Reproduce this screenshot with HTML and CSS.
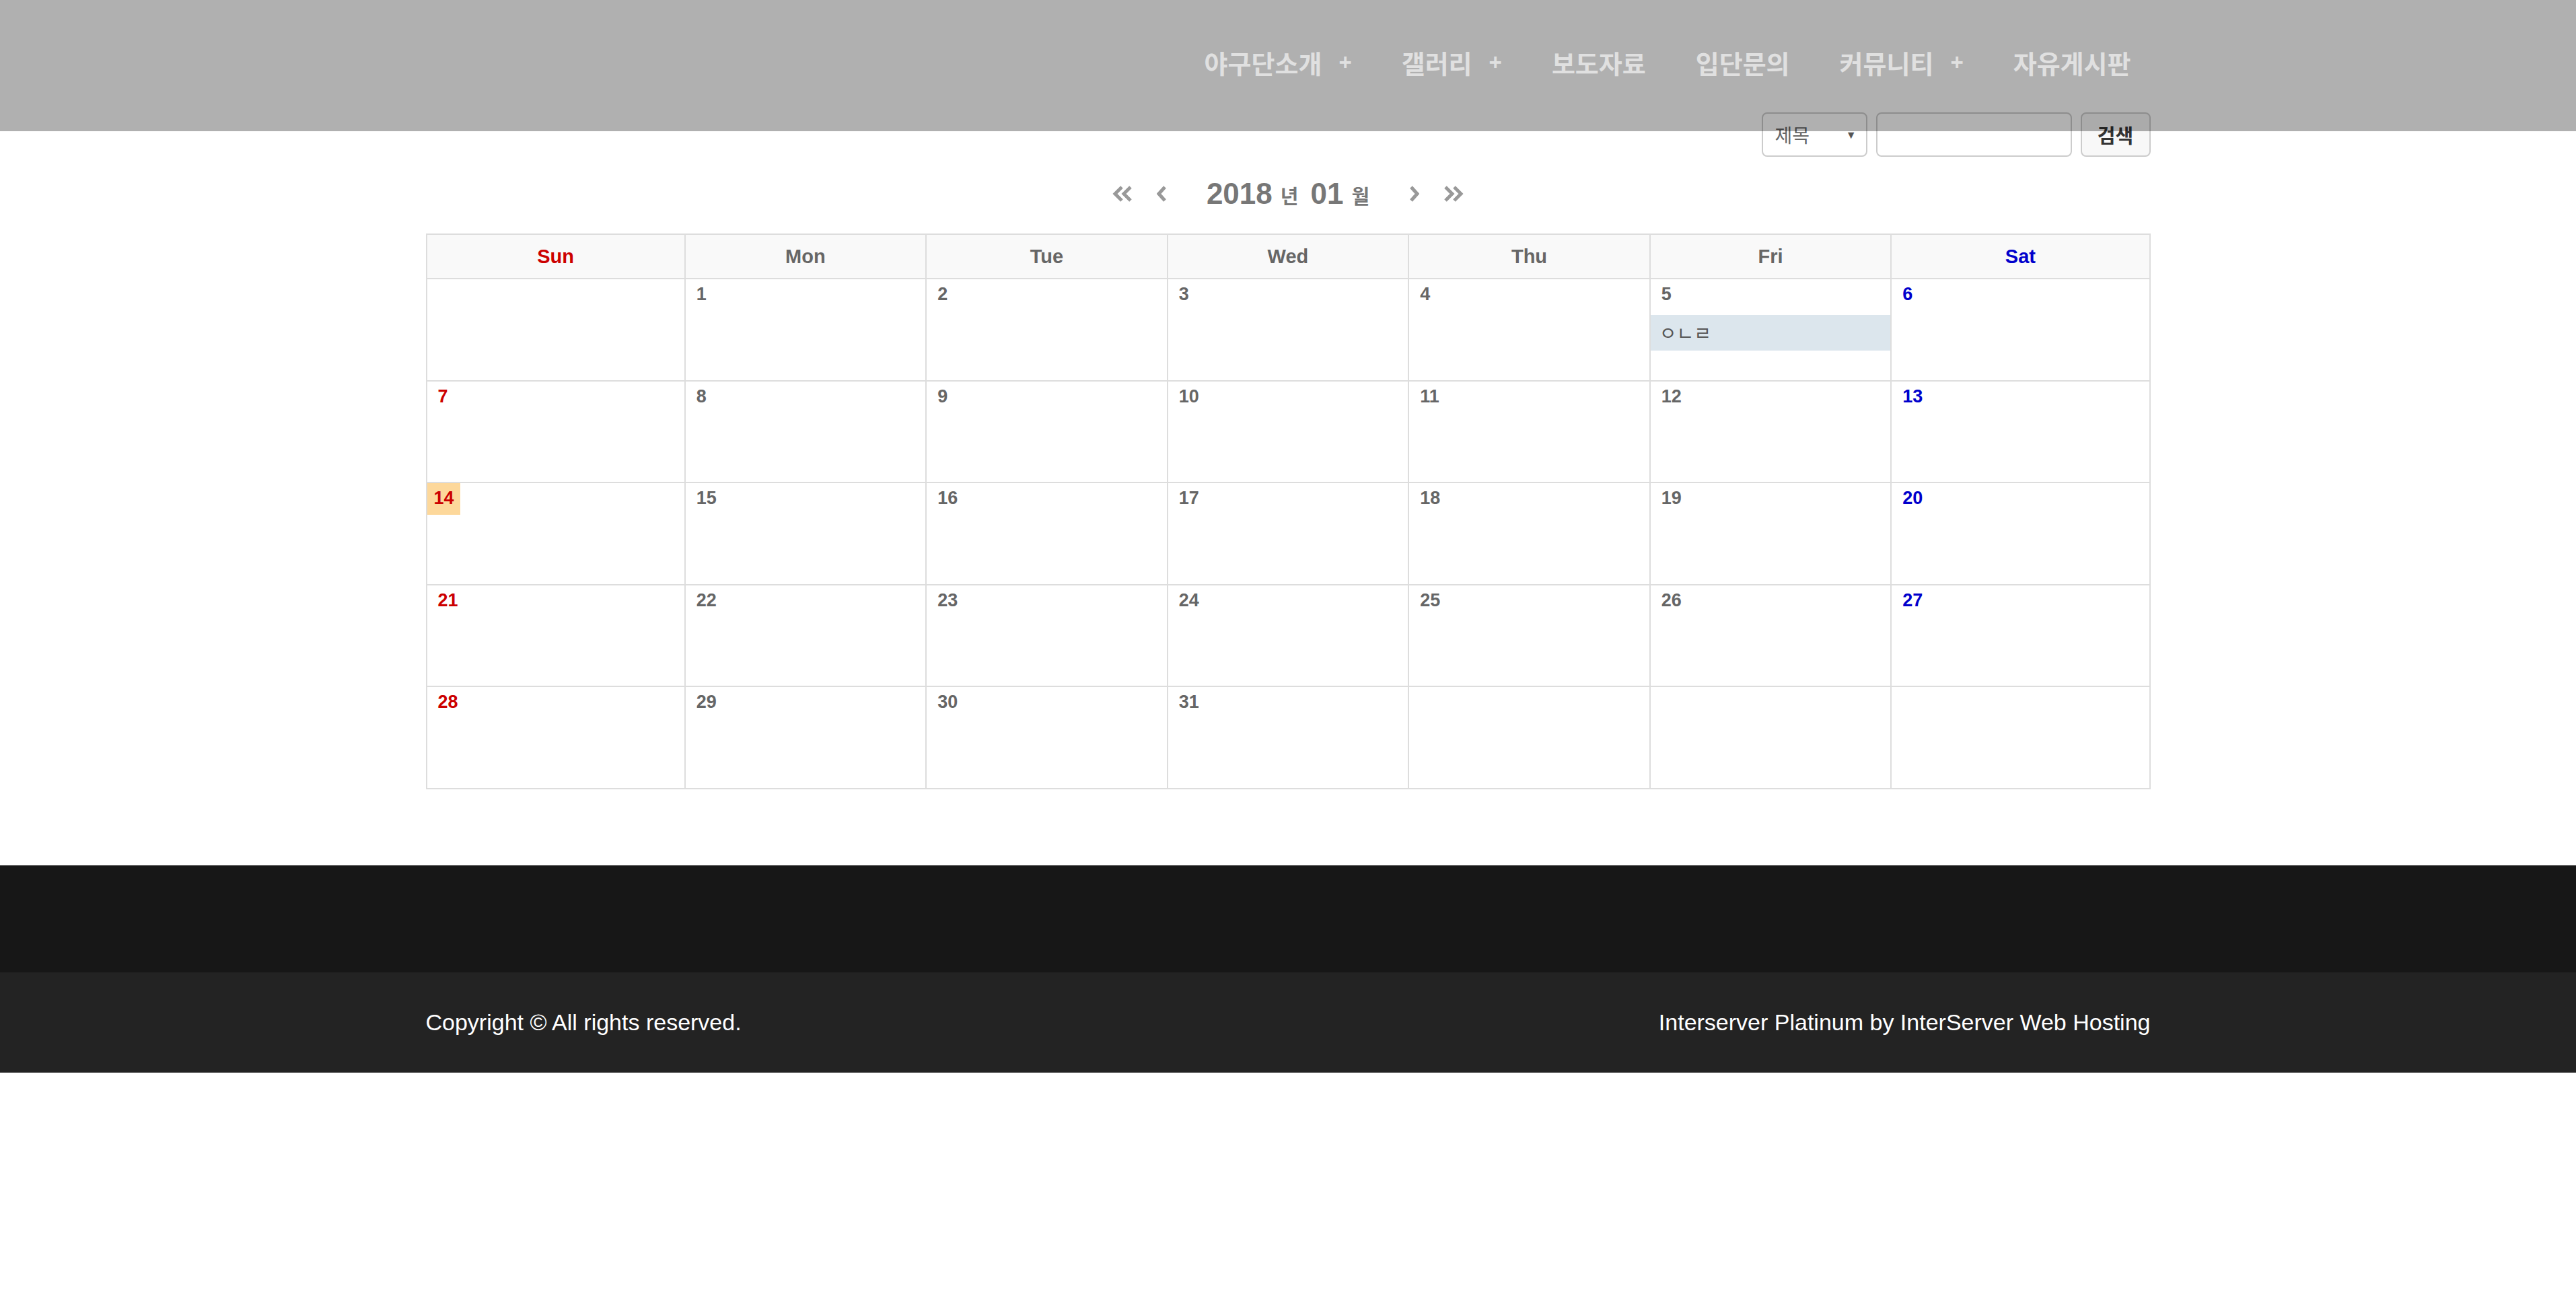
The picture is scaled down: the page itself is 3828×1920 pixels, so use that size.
FILE: index.html
```html
<!DOCTYPE html>
<html lang="ko">
<head>
<meta charset="UTF-8" />
<meta name="viewport" content="width=device-width, initial-scale=1" />
<title>일정 - 야구단</title>
<link rel="stylesheet" href="styles.css">
</head>

<body>
  <header class="site-header">
    <div class="container header-inner">
      <ul class="gnb">
        <li><a href="#">야구단소개</a><span class="plus">+</span></li>
        <li><a href="#">갤러리</a><span class="plus">+</span></li>
        <li><a href="#">보도자료</a></li>
        <li><a href="#">입단문의</a></li>
        <li><a href="#">커뮤니티</a><span class="plus">+</span></li>
        <li><a href="#">자유게시판</a></li>
      </ul>
    </div>
  </header>

  <main class="container">
    <form class="search">
      <div class="select-wrap">
        <select>
          <option>제목</option>
          <option>내용</option>
        </select>
      </div>
      <input type="text" class="search-input" />
      <button type="button" class="search-btn">검색</button>
    </form>

    <!-- 월 이동 -->
    <div class="cal-nav">
      <a href="#" class="arrow dbl prev-year">
        <svg width="30" height="24" viewBox="0 0 30 24"><path d="M14 2 L4 12 L14 22 M27 2 L17 12 L27 22" /></svg>
      </a>
      <a href="#" class="arrow prev-month">
        <svg width="14" height="24" viewBox="0 0 14 24"><path d="M12 2 L3 12 L12 22" /></svg>
      </a>
      <span class="cal-title">
        <b class="num">2018</b><span class="unit">년</span>
        <b class="num">01</b><span class="unit">월</span>
      </span>
      <a href="#" class="arrow next-month">
        <svg width="14" height="24" viewBox="0 0 14 24"><path d="M2 2 L11 12 L2 22" /></svg>
      </a>
      <a href="#" class="arrow dbl next-year">
        <svg width="30" height="24" viewBox="0 0 30 24"><path d="M3 2 L13 12 L3 22 M16 2 L26 12 L16 22" /></svg>
      </a>
    </div>

    <table class="calendar">
      <colgroup>
        <col class="we"><col class="wd"><col class="wd"><col class="wd"><col class="wd"><col class="wd"><col class="we">
      </colgroup>
      <thead>
        <tr>
          <th class="sun">Sun</th><th>Mon</th><th>Tue</th><th>Wed</th><th>Thu</th><th>Fri</th><th class="sat">Sat</th>
        </tr>
      </thead>
      <tbody>
        <tr>
          <td></td>
          <td><span class="day">1</span></td>
          <td><span class="day">2</span></td>
          <td><span class="day">3</span></td>
          <td><span class="day">4</span></td>
          <td>
            <span class="day">5</span>
            <div class="event">ㅇㄴㄹ</div>
          </td>
          <td class="sat"><span class="day">6</span></td>
        </tr>
        <tr>
          <td class="sun"><span class="day">7</span></td>
          <td><span class="day">8</span></td>
          <td><span class="day">9</span></td>
          <td><span class="day">10</span></td>
          <td><span class="day">11</span></td>
          <td><span class="day">12</span></td>
          <td class="sat"><span class="day">13</span></td>
        </tr>
        <tr>
          <td class="sun today"><span class="day">14</span></td>
          <td><span class="day">15</span></td>
          <td><span class="day">16</span></td>
          <td><span class="day">17</span></td>
          <td><span class="day">18</span></td>
          <td><span class="day">19</span></td>
          <td class="sat"><span class="day">20</span></td>
        </tr>
        <tr>
          <td class="sun"><span class="day">21</span></td>
          <td><span class="day">22</span></td>
          <td><span class="day">23</span></td>
          <td><span class="day">24</span></td>
          <td><span class="day">25</span></td>
          <td><span class="day">26</span></td>
          <td class="sat"><span class="day">27</span></td>
        </tr>
        <tr>
          <td class="sun"><span class="day">28</span></td>
          <td><span class="day">29</span></td>
          <td><span class="day">30</span></td>
          <td><span class="day">31</span></td>
          <td></td>
          <td></td>
          <td></td>
        </tr>
      </tbody>
    </table>
  </main>

  <footer>
    <div class="footer-top"></div>
    <div class="footer-bottom">
      <div class="container footer-inner">
        <p>Copyright &copy; All rights reserved.</p>
        <p>Interserver Platinum by InterServer Web Hosting</p>
      </div>
    </div>
  </footer>
</body>
</html>
```

FILE: styles.css
```css
body {
  margin: 0;
  padding: 0;
  font-family: "Liberation Sans", Arial, "Noto Sans CJK KR", sans-serif;
  font-size: 34px;
  color: #666;
  background: #fff;
  position: relative;
}
.container {
  width: 2563px;
  margin: 0 auto;
}

/* 상단 메뉴 */
.site-header {
  position: absolute;
  top: 0; left: 0; right: 0;
  height: 195px;
  background: rgba(0, 0, 0, 0.31);
  z-index: 10;
}
.header-inner {
  display: flex;
  justify-content: flex-end;
  padding-top: 72px;
}
.gnb {
  list-style: none;
  margin: 0;
  padding: 0;
  display: flex;
}
.gnb li {
  display: flex;
  align-items: center;
  padding: 0 37px;
  line-height: 42px;
}
.gnb li:last-child {
  padding-right: 29px;
}
.gnb a {
  font-family: "Noto Sans CJK KR", sans-serif;
  font-size: 38px;
  font-weight: 700;
  color: #e0e0e0;
  text-decoration: none;
}
.gnb .plus {
  margin-left: 25px;
  font-size: 33px;
  font-weight: 700;
  color: #e0e0e0;
}

/* 검색 */
.search {
  display: flex;
  justify-content: flex-end;
  gap: 13px;
  padding-top: 167px;
}
.select-wrap {
  position: relative;
}
.select-wrap::after {
  content: "\25BC";
  position: absolute;
  right: 16px;
  top: 25px;
  font-size: 16px;
  color: #555;
  pointer-events: none;
}
.select-wrap select {
  appearance: none;
  -webkit-appearance: none;
  width: 157px;
  height: 66px;
  padding: 0 0 0 18px;
  border: 2px solid #ccc;
  border-radius: 8px;
  background: #fff;
  font-family: "Noto Sans CJK KR", sans-serif;
  font-size: 28px;
  color: #666;
}
.search-input {
  box-sizing: border-box;
  width: 291px;
  height: 66px;
  border: 2px solid #ccc;
  border-radius: 8px;
  background: #fff;
}
.search-btn {
  width: 104px;
  height: 66px;
  border: 2px solid #ccc;
  border-radius: 8px;
  background: #f8f8f8;
  font-family: "Noto Sans CJK KR", sans-serif;
  font-size: 29px;
  font-weight: 700;
  color: #333;
  padding: 0;
}

/* 달력 이동 */
.cal-nav {
  display: flex;
  justify-content: center;
  align-items: center;
  height: 66px;
  margin-top: 22px;
  color: #777;
}
.cal-nav .arrow {
  display: flex;
  align-items: center;
}
.cal-nav .arrow path {
  fill: none;
  stroke: #999;
  stroke-width: 5;
}
.cal-nav .prev-month { margin-left: 36px; }
.cal-nav .next-month { margin-right: 36px; }
.cal-title {
  margin: 0 60px;
  display: flex;
  align-items: baseline;
}
.cal-title .num {
  font-size: 44px;
  font-weight: 700;
}
.cal-title .unit {
  font-family: "Noto Sans CJK KR", sans-serif;
  font-size: 29px;
  font-weight: 700;
  margin: 0 18px 0 12px;
}
.cal-title .unit:last-child {
  margin-right: 0;
}

/* 달력 */
.calendar {
  width: 100%;
  margin-top: 26px;
  border-collapse: collapse;
  table-layout: fixed;
}
.calendar col.we { width: 15%; }
.calendar col.wd { width: 14%; }
.calendar th,
.calendar td {
  border: 2px solid #ddd;
  padding: 0;
}
.calendar th {
  height: 64px;
  background: #f9f9f9;
  font-size: 29px;
  font-weight: 700;
  color: #666;
}
.calendar td {
  height: 149.6px;
  vertical-align: top;
}
.calendar .day {
  display: inline-block;
  margin-left: 6px;
  padding: 7px 10px 9px;
  font-size: 27px;
  font-weight: 700;
  line-height: 31px;
  color: #666;
}
.calendar .sun,
.calendar .sun .day { color: #cc0000; }
.calendar .sat,
.calendar .sat .day { color: #0000cc; }
.calendar .today .day {
  margin-left: 0;
  padding: 7px 9px 9px 10px;
  background: #fdd89b;
}
.event {
  margin-top: 6px;
  height: 53px;
  line-height: 53px;
  padding-left: 13px;
  background: #dce6ed;
  font-family: "Noto Sans CJK KR", sans-serif;
  font-size: 28px;
  color: #555;
}

/* 하단 */
footer {
  margin-top: 113px;
  color: #fff;
}
.footer-top {
  height: 159px;
  background: #171717;
}
.footer-bottom {
  height: 149px;
  background: #232323;
  display: flex;
  align-items: center;
}
.footer-inner {
  display: flex;
  justify-content: space-between;
}
.footer-inner p {
  margin: 0;
}
```
